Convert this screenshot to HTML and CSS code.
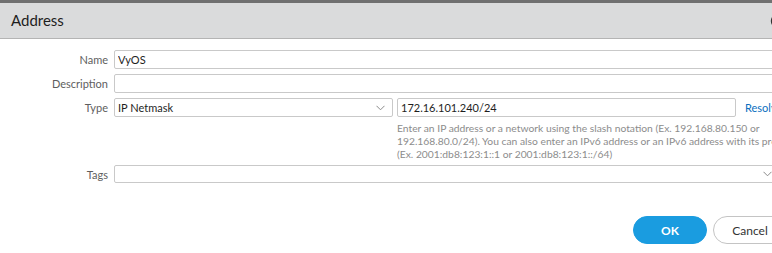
FILE: index.html
```html
<!DOCTYPE html>
<html lang="en">

<head>
  <meta charset="UTF-8">
  <title>Address</title>
  <link rel="stylesheet" href="styles.css">
</head>

<body>
  <div class="dialog">
    <header class="dialog-header">
      <h1>Address</h1>
      <button class="close-btn" aria-label="Close">
        <svg width="16" height="16" viewBox="0 0 16 16" fill="none" stroke="#333" stroke-width="1.4">
          <circle cx="8" cy="8" r="6.5"></circle>
          <path d="M5.5 5.5l5 5M10.5 5.5l-5 5"></path>
        </svg>
      </button>
    </header>

    <form class="form">
      <label class="label" for="name">Name</label>
      <input id="name" class="field" type="text" value="VyOS">

      <label class="label" for="description">Description</label>
      <input id="description" class="field" type="text">

      <label class="label" for="type">Type</label>
      <div class="type-row">
        <div id="type" class="field select">
          <span>IP Netmask</span>
          <svg class="chevron" width="9" height="6" viewBox="0 0 9 6" fill="none" stroke="#8a8a8a" stroke-width="1">
            <path d="M0.5 0.8l4 4 4-4"></path>
          </svg>
        </div>
        <input class="field" type="text" value="172.16.101.240/24">
        <a class="resolve" href="#">Resolve</a>
      </div>

      <div class="help">
        Enter an IP address or a network using the slash notation (Ex. 192.168.80.150 or<br>
        192.168.80.0/24). You can also enter an IPv6 address or an IPv6 address with its prefix<br>
        (Ex. 2001:db8:123:1::1 or 2001:db8:123:1::/64)
      </div>

      <label class="label" for="tags">Tags</label>
      <div id="tags" class="field select tags">
        <span></span>
        <svg class="chevron" width="9" height="6" viewBox="0 0 9 6" fill="none" stroke="#8a8a8a" stroke-width="1">
          <path d="M0.5 0.8l4 4 4-4"></path>
        </svg>
      </div>
    </form>

    <div class="actions">
      <button class="btn primary" type="button">OK</button>
      <button class="btn" type="button">Cancel</button>
    </div>
  </div>
</body>

</html>
```

FILE: styles.css
```css
* {
  margin: 0;
  padding: 0;
  box-sizing: border-box;
  font-family: 'Lato', 'Liberation Sans', sans-serif;
}

html,
body {
  overflow: hidden;
  background: #ffffff;
}

.dialog {
  width: 800px;
  border-top: 3px solid #707070;
  background: #ffffff;
}

.dialog-header {
  display: flex;
  align-items: center;
  justify-content: space-between;
  height: 36px;
  padding: 0 10px 0 11px;
  background-color: #dadbdc;
  border-bottom: 1px solid #b4b4b4;
}

.dialog-header h1 {
  font-size: 15px;
  font-weight: 400;
  color: #1e1e1e;
  margin-top: -1px;
}

.close-btn {
  display: flex;
  background: none;
  border: none;
  margin-right: 4px;
}

.form {
  display: grid;
  grid-template-columns: 108px 671px;
  column-gap: 6px;
  row-gap: 5px;
  align-items: center;
  margin-top: 11px;
}

.label {
  text-align: right;
  font-size: 11px;
  color: #5e5e5e;
}

.field {
  height: 19px;
  border: 1px solid #c9c9c9;
  border-radius: 2px;
  padding: 0 3px;
  font-size: 11px;
  color: #1e1e1e;
  background: #ffffff;
  outline: none;
}

.select {
  display: flex;
  align-items: center;
  justify-content: space-between;
  padding-right: 7px;
}

.type-row {
  display: grid;
  grid-template-columns: 279px 339px auto;
  column-gap: 4px;
  align-items: center;
}

.resolve {
  margin-left: 5px;
  font-size: 11px;
  color: #0b6fc0;
  text-decoration: none;
}

.help {
  grid-column: 2;
  margin: 0 0 -1px 283px;
  font-size: 10.3px;
  line-height: 13px;
  color: #8c8c8c;
  white-space: nowrap;
}

.tags {
  height: 18px;
  padding-right: 12px;
}

.actions {
  display: flex;
  justify-content: flex-end;
  gap: 6px;
  margin-top: 33px;
  padding-right: 13px;
}

.btn {
  width: 74px;
  height: 28px;
  border-radius: 14px;
  border: 1px solid #c4c4c4;
  background: #ffffff;
  font-size: 12px;
  color: #333333;
}

.btn.primary {
  border-color: #1a9ce0;
  background-color: #1a9ce0;
  color: #ffffff;
  font-weight: 700;
}
```
